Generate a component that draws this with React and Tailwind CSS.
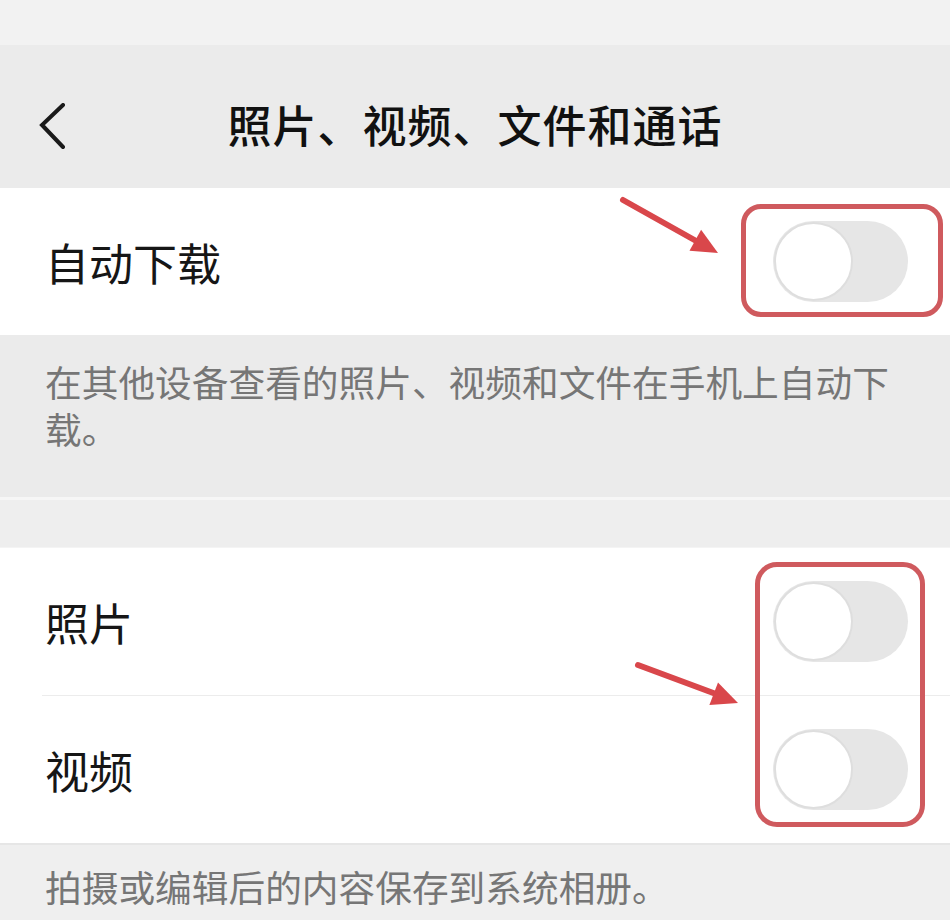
const Toggle = () => (
  <div className="mr-[42px] h-[81px] w-[135px] rounded-full bg-[#e6e6e6] p-[1px]">
    <div className="h-[79px] w-[79px] rounded-full border-2 border-[#dedede] bg-white" />
  </div>
);

const Row = ({ label }) => (
  <div className="flex h-[147px] items-center justify-between bg-white pl-[45px]">
    <span className="text-[44px] leading-none text-[#161616]">{label}</span>
    <Toggle />
  </div>
);

export default function App() {
  return (
    <div
      className="relative h-[920px] w-[950px] overflow-hidden bg-[#efefef]"
      style={{ fontFamily: '"Noto Sans CJK SC", "Noto Sans", sans-serif' }}
    >
      <div className="h-[45px] bg-[#f2f2f2]" />

      <div className="relative flex h-[143px] items-center justify-center bg-[#ebebeb] pt-[14px]">
        <svg className="absolute left-[36px] top-[58px]" width="32" height="48" viewBox="0 0 32 48">
          <path d="M27 2 L6 22 L27 44" fill="none" stroke="#1a1a1a" strokeWidth="4" strokeLinecap="round" strokeLinejoin="miter" />
        </svg>
        <h1 className="text-[44px] font-medium leading-none tracking-[1px] text-[#111]">照片、视频、文件和通话</h1>
      </div>

      <Row label="自动下载" />

      <div className="h-[162px] bg-[#ebebeb] pl-[45px] pr-[40px] pt-[23px]">
        <p className="text-[36.7px] leading-[47px] text-[#767676]">在其他设备查看的照片、视频和文件在手机上自动下载。</p>
      </div>

      <div className="h-[3px] bg-[#f6f6f6]" />
      <div className="h-[48px] border-b border-[#f4f4f4] bg-[#eeeeee]" />

      <Row label="照片" />
      <div className="bg-white">
        <div className="ml-[42px] h-px bg-[#ececec]" />
      </div>
      <Row label="视频" />

      <div className="border-t-2 border-[#e6e6e6] bg-[#efefef] pl-[45px] pt-[18px]">
        <p className="text-[36.7px] leading-[47px] text-[#767676]">拍摄或编辑后的内容保存到系统相册。</p>
      </div>

      <div className="pointer-events-none absolute left-[741px] top-[204px] h-[113px] w-[202px] rounded-[20px] border-[5px] border-[#cf5a5e]" />
      <div className="pointer-events-none absolute left-[755px] top-[562px] h-[265px] w-[170px] rounded-[22px] border-[5px] border-[#cf5a5e]" />

      <svg className="pointer-events-none absolute left-0 top-0" width="950" height="920" viewBox="0 0 950 920">
        <line x1="623" y1="200" x2="698" y2="242" stroke="#d9474b" strokeWidth="6" strokeLinecap="round" />
        <polygon points="718,253 689.5,250.8 701.1,229.8" fill="#d9474b" />
        <line x1="638" y1="665" x2="716" y2="694" stroke="#d9474b" strokeWidth="6" strokeLinecap="round" />
        <polygon points="738,703 709.4,705 718,682.6" fill="#d9474b" />
      </svg>
    </div>
  );
}
